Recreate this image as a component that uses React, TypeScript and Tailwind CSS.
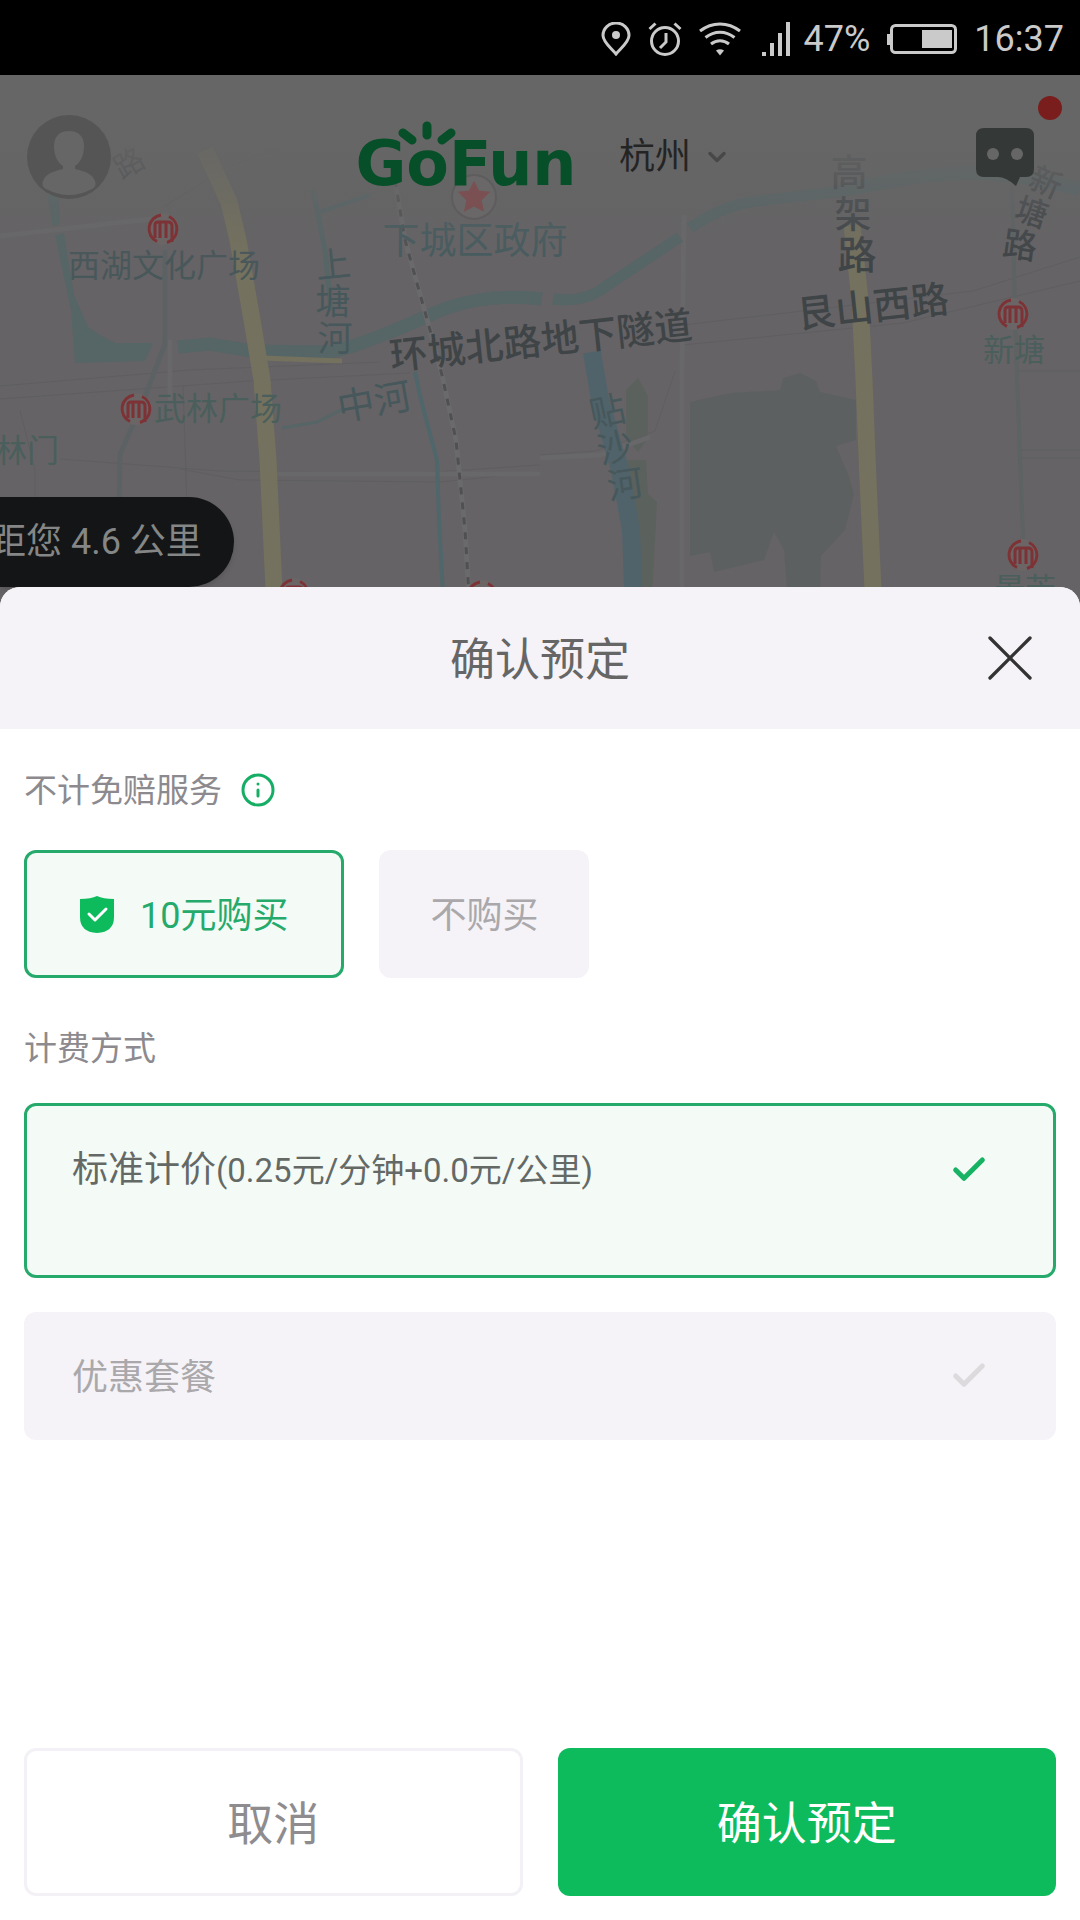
import { useState } from 'react';
import { Check, ChevronDown, Info, X } from 'lucide-react';

type MapLabel = {
  text: string;
  x: number;
  y: number;
  size: number;
  color: string;
  rotate?: number;
  weight?: number;
};

const POI = '#4a5f5b';
const ROAD = '#3f4447';
const WATER = '#46585b';

// x / y are the centre of each label on the map canvas
const mapLabels: MapLabel[] = [
  { text: '西湖文化广场', x: 164, y: 265, size: 32, color: '#48575a' },
  { text: '下城区政府', x: 475, y: 240, size: 37, color: '#465b5f' },
  { text: '武林广场', x: 218, y: 408, size: 32, color: POI },
  { text: '林门', x: 27, y: 450, size: 32, color: POI },
  { text: '新塘', x: 1014, y: 350, size: 31, color: POI },
  { text: '景芳', x: 1025, y: 589, size: 31, color: POI },
  { text: '环城北路地下隧道', x: 541, y: 340, size: 38, color: ROAD, rotate: -6, weight: 500 },
  { text: '艮山西路', x: 873, y: 306, size: 38, color: ROAD, rotate: -6, weight: 500 },
  { text: '高', x: 849, y: 172, size: 37, color: ROAD, weight: 500 },
  { text: '架', x: 853, y: 214, size: 37, color: ROAD, weight: 500 },
  { text: '路', x: 857, y: 255, size: 39, color: ROAD, weight: 500 },
  { text: '新', x: 1046, y: 182, size: 32, color: ROAD, rotate: 24, weight: 500 },
  { text: '塘', x: 1032, y: 212, size: 32, color: ROAD, rotate: 18, weight: 500 },
  { text: '路', x: 1020, y: 245, size: 34, color: ROAD, rotate: 8, weight: 500 },
  { text: '路', x: 129, y: 163, size: 30, color: ROAD, rotate: -30 },
  { text: '上', x: 333, y: 264, size: 35, color: WATER, rotate: -6 },
  { text: '塘', x: 333, y: 301, size: 35, color: WATER },
  { text: '河', x: 335, y: 338, size: 35, color: WATER },
  { text: '中河', x: 374, y: 401, size: 37, color: WATER, rotate: -10 },
  { text: '贴', x: 607, y: 411, size: 36, color: WATER, rotate: -12 },
  { text: '沙', x: 615, y: 447, size: 36, color: WATER, rotate: -14 },
  { text: '河', x: 625, y: 484, size: 36, color: WATER, rotate: -8 },
];

const metroStops = [
  { x: 163, y: 229 },
  { x: 136, y: 409 },
  { x: 1013, y: 314 },
  { x: 1023, y: 555 },
  { x: 294, y: 594 },
  { x: 482, y: 596 },
];

const StatusBar = () => (
  <div className="flex h-[75px] items-center justify-end gap-[17px] bg-black pr-4 pt-[2px] text-[36px] leading-none text-[#cacaca]">
    <svg className="h-[34px] w-[30px]" viewBox="0 0 30 34" fill="none" aria-hidden="true">
      <path d="M15 32C10 26 2 20 2 13.500a13 12.500 0 0 1 26 0C28 20 20 26 15 32Z" stroke="currentColor" strokeWidth="3" />
      <circle cx="15" cy="13" r="4" fill="currentColor" />
    </svg>
    <svg className="h-[34px] w-[34px]" viewBox="0 0 34 34" fill="none" stroke="currentColor" strokeWidth="3" aria-hidden="true">
      <circle cx="17" cy="19" r="13.500" />
      <path d="M18 11v9l-6 6M1.500 7l6-5.500M32.500 7l-6-5.500" />
    </svg>
    <svg className="h-[34px] w-[42px]" viewBox="0 0 42 34" fill="none" stroke="currentColor" strokeWidth="3" aria-hidden="true">
      <path d="M1 9c12-9.500 28-9.500 40 0M6.500 15.500c9-7 20-7 29 0M12 22c5.500-4.500 12.500-4.500 18 0" />
      <path d="M17 28.500q4-2.500 8 0l-4 5Z" fill="currentColor" stroke="none" />
    </svg>
    <svg className="ml-1 h-[34px] w-[29px]" viewBox="0 0 29 34" fill="currentColor" aria-hidden="true">
      <path d="M0 30h4v4H0zM8 21h4v13H8zM16 11h4v23h-4zM24 0h4v34h-4z" />
    </svg>
    <span className="-ml-1">47%</span>
    <svg className="h-[32px] w-[70px]" viewBox="0 0 70 32" fill="none" aria-hidden="true">
      <rect x="4.500" y="2.500" width="64" height="27" rx="4" stroke="currentColor" strokeWidth="3" />
      <path d="M0 11h4v11H0zM35 7h30v18H35z" fill="currentColor" />
    </svg>
    <span>16:37</span>
  </div>
);

const CityMap = () => (
  <svg className="block h-full w-full" viewBox="0 75 1080 536" preserveAspectRatio="xMidYMid slice" role="img" aria-label="地图">
    <defs>
      <linearGradient id="fade" x1="0" y1="0" x2="0" y2="1">
        <stop offset="0" stopColor="#666" />
        <stop offset="0.3" stopColor="#666" stopOpacity="0.95" />
        <stop offset="0.55" stopColor="#666" stopOpacity="0.65" />
        <stop offset="0.8" stopColor="#666" stopOpacity="0.2" />
        <stop offset="1" stopColor="#666" stopOpacity="0" />
      </linearGradient>
    </defs>
    <rect y="75" width="1080" height="536" fill="#656365" />

    {/* parks */}
    <path d="M690 402l40-9 50-3 3-12 17-5 16 8 4 11 36 8v40l-20 6 12 28 6 20-9 36-24 26-1 50h-32l-4-56-10-18-10 28-50 12-4-20-20 4Z" fill="#5d6061" />
    <path d="M626 390l12-12 10 18v42l-10 14-12-14ZM626 460h20l2 34 9 8-6 110h-14l-4-60Z" fill="#5b615d" />

    {/* minor roads */}
    <g fill="none" stroke="#5f5e60" strokeWidth="1">
      <path d="M0 386l190-16 190-8M0 399l250-18 160-8M60 459l160 12 200 2 120-8M180 469l60 11 200 2 100-10" />
      <path d="M0 236l60-6 100-14M165 206l60-38 60-22M183 385l2 60 5 155M683 325l290-34 107-34M683 345l220-22 177-42" />
      <path d="M1018 371h62M1022 450h58M1022 458h58M540 455l55-4 60-20 20-60M20 410l15 60v60" />
    </g>
    <g fill="none" stroke="#686769" strokeWidth="5">
      <path d="M684 215l-2 150v247M0 236l160-18M540 458l60-3 50-18" />
      <path d="M170 340v60M270 474h270" />
    </g>
    <path d="M165 250v94l-22 58-23 52-3 160" fill="none" stroke="#5c6263" strokeWidth="5" />
    <path d="M1012 185l3 130 3 85 5 140" fill="none" stroke="#5d6263" strokeWidth="4" />

    {/* rivers */}
    <g fill="none" stroke="#566566">
      <path d="M47 195h12l1 28-7 4ZM55 235l9-2 10 62 14 32 12 8 15 8h38l-8 18-70 2-4-53Z" fill="#566566" strokeWidth="0" />
      <path d="M178 347l32-3 42 7 75 1q25-2 105-38 50-22 110-15" strokeWidth="13" />
      <path d="M553 299q32 4 52-12l75-50M690 228q28-20 60-26l84-10" strokeWidth="11" />
      <path d="M834 192q100-22 150-19 50 4 96 16" strokeWidth="14" />
      <path d="M313 190l12 60 6 60M320 212l50-17" strokeWidth="5" />
      <path d="M282 428l35-6 28-14" strokeWidth="3" />
    </g>
    <path d="M415 372l6 28 16 60 2 60 5 92" fill="none" stroke="#4f666b" strokeWidth="4" />
    <path d="M592 352l8 48 20 70 11 60 3 82" fill="none" stroke="#51636a" strokeWidth="18" />

    {/* expressways */}
    <g fill="none" stroke="#74715e" strokeWidth="17">
      <path d="M205 150l24 52 9 38 14 80 10 60 6 80 7 152" />
      <path d="M852 225l8 75 4 80 4 100 6 132" />
      <path d="M262 358l80 3" strokeWidth="5" />
    </g>
    <path d="M395 180l10 60 25 90 12 45 14 65 9 90 5 82" fill="none" stroke="#6a696b" strokeWidth="5" />
    <path d="M395 180l10 60 25 90 12 45 14 65 9 90 5 82" fill="none" stroke="#505052" strokeWidth="3" strokeDasharray="7 8" />

    {mapLabels.map((label, index) => (
      <text
        key={index}
        x={label.x}
        y={label.y}
        dy="0.37em"
        textAnchor="middle"
        fontSize={label.size}
        fontWeight={label.weight ?? 400}
        fill={label.color}
        transform={`rotate(${label.rotate ?? 0} ${label.x} ${label.y})`}
      >
        {label.text}
      </text>
    ))}

    <rect y="75" width="1080" height="190" fill="url(#fade)" />

    {metroStops.map((stop) => (
      <g key={`${stop.x}-${stop.y}`} transform={`translate(${stop.x} ${stop.y})`}>
        <circle r="16" fill="#6b6566" />
        <path d="M-6 12.500A14 14 0 0 1 -2 -14M6 -12.500A14 14 0 0 1 4 13.500" fill="none" stroke="#7d3336" strokeWidth="3" />
        <path d="M-8 9V-4q0-3 3-3h10q4 0 4 4V13M-3 9V-6M3 9V-6" fill="none" stroke="#7d3336" strokeWidth="3" />
      </g>
    ))}

    <circle cx="474" cy="197" r="22" fill="#696768" stroke="#5e5d5e" strokeWidth="2" />
    <path d="M474 184l4 8 9 1-7 7 2 9-8-4-8 4 2-9-7-7 9-1Z" fill="#7a5053" stroke="#7a5053" strokeWidth="3" />
  </svg>
);

const GoFunLogo = () => (
  <div className="relative flex h-[64px] w-[234px] items-end justify-center font-['DejaVu_Sans'] text-[62px] font-bold leading-[50px] text-[#064f28]">
    GoFun
    <svg className="absolute left-[48px] -top-1 h-[24px] w-[60px]" viewBox="0 0 60 24" fill="none" stroke="#064f28" strokeWidth="9" strokeLinecap="round" aria-hidden="true">
      <path d="M6 12l9 7M30 5v9M54 12l-9 7" />
    </svg>
  </div>
);

const MapHeader = () => (
  <header className="absolute inset-x-0 top-0 grid grid-cols-[1fr_auto_1fr] items-center px-[27px] pt-[40px]">
    <button type="button" aria-label="个人中心" className="w-[84px]">
      <svg className="h-[84px] w-[84px]" viewBox="0 0 84 84" aria-hidden="true">
        <circle cx="42" cy="42" r="42" fill="#555" />
        <path d="M42 16c10 0 15 6 15 15 0 10-4 17-9 20v3c12 3 17 5 20 12q2 5-3 8-23 12-46 0-5-3-3-8c3-7 8-9 20-12v-3c-5-3-9-10-9-20 0-9 5-15 15-15Z" fill="#666" />
      </svg>
    </button>
    <div className="flex items-center gap-9">
      <GoFunLogo />
      <button type="button" className="flex items-center gap-3 text-[36px] leading-none text-[#242424]">
        杭州
        <ChevronDown className="h-7 w-7 text-[#484848]" strokeWidth={3} aria-hidden="true" />
      </button>
    </div>
    <button type="button" aria-label="客服消息" className="relative mr-[19px] justify-self-end">
      <svg className="h-[58px] w-[58px]" viewBox="0 0 58 58" aria-hidden="true">
        <path d="M8 0h42q8 0 8 8v33q0 8-8 8h-6l-4 9q-10-9-18-9H8q-8 0-8-8V8q0-8 8-8Z" fill="#343837" />
        <circle cx="17" cy="26" r="6" fill="#666" />
        <circle cx="41" cy="26" r="6" fill="#666" />
      </svg>
      <span className="absolute -right-7 -top-8 h-6 w-6 rounded-full bg-[#7a1d1d]" />
    </button>
  </header>
);

const ShieldCheck = () => (
  <svg className="h-[37px] w-[34px]" viewBox="0 0 34 37" aria-hidden="true">
    <path d="M17 0q6 3 17 3v18q0 15-17 16Q0 36 0 21V3q11 0 17-3Z" fill="#0dbb5d" />
    <path d="M9 18l6 6 11-11" fill="none" stroke="#fff" strokeWidth="3" strokeLinecap="round" strokeLinejoin="round" />
  </svg>
);

const SELECTED = 'border-[#25aa6b] bg-[#f4fbf6]';
const IDLE = 'border-[#f5f3f7] bg-[#f5f3f7] text-[#aaa8ab]';

export default function App() {
  const [insured, setInsured] = useState(true);
  const [plan, setPlan] = useState('standard');

  return (
    <div lang="zh-CN" className="flex min-h-screen flex-col bg-white font-[Roboto,'Noto_Sans_CJK_SC',sans-serif]">
      <StatusBar />

      {/* Dimmed map behind the sheet */}
      <section className="relative h-[536px] overflow-hidden bg-[#656365]">
        <CityMap />
        <MapHeader />
        <div className="absolute bottom-6 left-0 flex h-[90px] items-center rounded-r-full bg-[#131516] pr-8 text-[36px] leading-none text-[#858686] shadow-md">
          <span className="-ml-[10px]">距您 4.6 公里</span>
        </div>
      </section>

      {/* Booking sheet */}
      <main className="relative -mt-6 flex flex-1 flex-col overflow-hidden rounded-t-[20px] bg-white">
        <div className="relative flex h-[142px] items-center justify-center bg-[#f5f3f7]">
          <h1 className="pt-1 text-[45px] leading-none text-[#666]">确认预定</h1>
          <button type="button" aria-label="关闭" className="absolute right-[30px]">
            <X className="h-20 w-20 text-[#333]" strokeWidth={1} aria-hidden="true" />
          </button>
        </div>

        <div className="flex flex-1 flex-col px-6 pb-6 pt-9">
          <div className="flex h-[50px] items-center gap-[18px]">
            <h2 id="waiver-title" className="pt-[2px] text-[33px] leading-[50px] text-[#8c8a8e]">不计免赔服务</h2>
            <button type="button" aria-label="服务说明">
              <Info className="h-9 w-9 text-[#16ae65]" strokeWidth={2} aria-hidden="true" />
            </button>
          </div>
          <div role="radiogroup" aria-labelledby="waiver-title" className="mt-[35px] flex gap-[35px] text-[36px] leading-none">
            <label className={`flex h-32 cursor-pointer items-center gap-[26px] rounded-xl border-[3px] px-[53px] ${insured ? `${SELECTED} text-[#25aa6b]` : IDLE}`}>
              <input type="radio" name="waiver" className="sr-only" checked={insured} onChange={() => setInsured(true)} />
              <ShieldCheck />
              <span className="pt-1">10元购买</span>
            </label>
            <label className={`flex h-32 cursor-pointer items-center rounded-xl border-[3px] px-12 ${insured ? IDLE : `${SELECTED} text-[#25aa6b]`}`}>
              <input type="radio" name="waiver" className="sr-only" checked={!insured} onChange={() => setInsured(false)} />
              <span className="pt-1">不购买</span>
            </label>
          </div>

          <h2 id="plan-title" className="mt-[46px] text-[33px] leading-[50px] text-[#8c8a8e]">计费方式</h2>
          <div role="radiogroup" aria-labelledby="plan-title" className="mt-[29px] flex flex-col gap-[34px] text-[36px]">
            <label className={`flex h-[175px] cursor-pointer items-start justify-between rounded-xl border-[3px] pl-[45px] pr-16 pt-[39px] leading-[50px] ${plan === 'standard' ? `${SELECTED} text-[#646966]` : IDLE}`}>
              <input type="radio" name="plan" className="sr-only" checked={plan === 'standard'} onChange={() => setPlan('standard')} />
              <span>
                标准计价<span className="text-[33px]">(0.25元/分钟+0.0元/公里)</span>
              </span>
              <Check className={`h-[50px] w-10 ${plan === 'standard' ? 'text-[#16b364]' : 'text-[#dcdadd]'}`} strokeWidth={3} aria-hidden="true" />
            </label>
            <label className={`flex h-32 cursor-pointer items-center justify-between rounded-xl border-[3px] pl-[45px] pr-16 leading-[50px] ${plan === 'package' ? `${SELECTED} text-[#646966]` : IDLE}`}>
              <input type="radio" name="plan" className="sr-only" checked={plan === 'package'} onChange={() => setPlan('package')} />
              <span className="pt-1">优惠套餐</span>
              <Check className={`h-[50px] w-10 ${plan === 'package' ? 'text-[#16b364]' : 'text-[#dcdadd]'}`} strokeWidth={3} aria-hidden="true" />
            </label>
          </div>

          <div className="mt-auto grid grid-cols-2 gap-[35px] pt-12 leading-none">
            <button type="button" className="h-[148px] rounded-xl border-[3px] border-[#f4f1f6] bg-white pt-1 text-[46px] text-[#8e8c8f]">取消</button>
            <button type="button" className="h-[148px] rounded-xl bg-[#0dbb5d] pt-1 text-[45px] text-white">确认预定</button>
          </div>
        </div>
      </main>
    </div>
  );
}
